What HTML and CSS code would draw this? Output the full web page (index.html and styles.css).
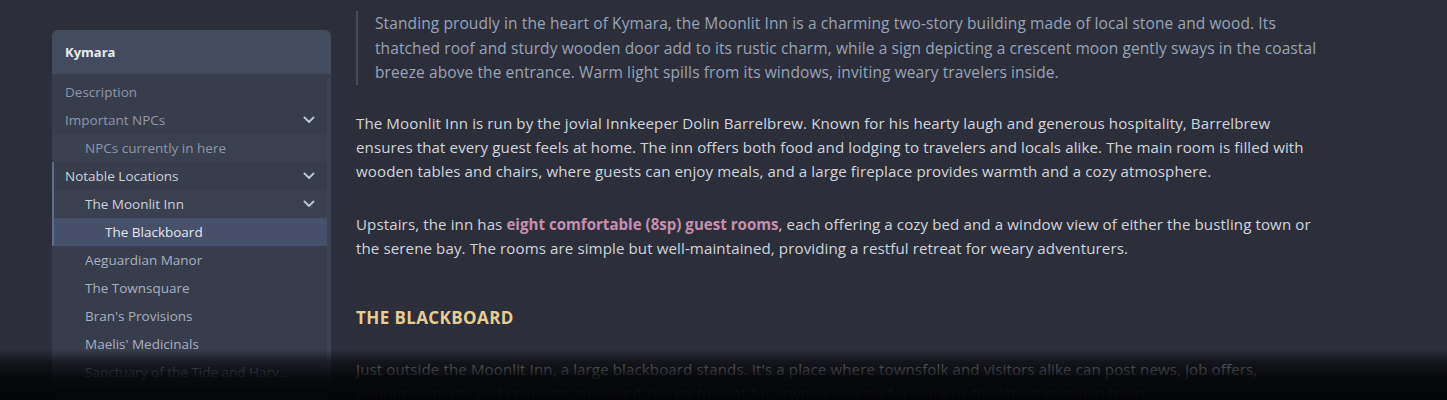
FILE: index.html
```html
<!DOCTYPE html>
<html lang="en">
<head>
<meta charset="utf-8">
<title>Kymara – The Moonlit Inn</title>
<link rel="stylesheet" href="styles.css">
</head>
<body>
<div class="layout">
  <nav class="sidebar">
    <div class="sidebar-head">Kymara</div>
    <div class="sidebar-body">
      <ul class="nav">
        <li class="row lvl1 dim"><span class="label">Description</span></li>
        <li class="row lvl1 dim has-caret"><span class="label">Important NPCs</span>
          <svg class="caret" viewBox="0 0 12 8" width="12" height="8"><polyline points="1.5,1.5 6,6 10.5,1.5"/></svg>
        </li>
        <li class="row lvl2 dim sub"><span class="label">NPCs currently in here</span></li>
        <li class="group">
          <div class="row lvl1 bright has-caret"><span class="label">Notable Locations</span>
            <svg class="caret" viewBox="0 0 12 8" width="12" height="8"><polyline points="1.5,1.5 6,6 10.5,1.5"/></svg>
          </div>
          <div class="row lvl2 bright has-caret sub"><span class="label">The Moonlit Inn</span>
            <svg class="caret" viewBox="0 0 12 8" width="12" height="8"><polyline points="1.5,1.5 6,6 10.5,1.5"/></svg>
          </div>
          <div class="row lvl3 active"><span class="label">The Blackboard</span></div>
        </li>
        <li class="row lvl2"><span class="label">Aeguardian Manor</span></li>
        <li class="row lvl2"><span class="label">The Townsquare</span></li>
        <li class="row lvl2"><span class="label">Bran's Provisions</span></li>
        <li class="row lvl2"><span class="label">Maelis' Medicinals</span></li>
        <li class="row lvl2"><span class="label">Sanctuary of the Tide and Harvest</span></li>
        <li class="row lvl2"><span class="label">The Harbour</span></li>
      </ul>
      <div class="scrolltrack"></div>
    </div>
  </nav>
  <main class="content">
    <blockquote class="quote">Standing proudly in the heart of Kymara, the Moonlit Inn is a charming two-story building made of local stone and wood. Its thatched roof and sturdy wooden door add to its rustic charm, while a sign depicting a crescent moon gently sways in the coastal breeze above the entrance. Warm light spills from its windows, inviting weary travelers inside.</blockquote>
    <p class="para">The Moonlit Inn is run by the jovial Innkeeper Dolin Barrelbrew. Known for his hearty laugh and generous hospitality, Barrelbrew ensures that every guest feels at home. The inn offers both food and lodging to travelers and locals alike. The main room is filled with wooden tables and chairs, where guests can enjoy meals, and a large fireplace provides warmth and a cozy atmosphere.</p>
    <p class="para">Upstairs, the inn has <strong class="hl">eight comfortable (8sp) guest rooms</strong>, each offering a cozy bed and a window view of either the bustling town or the serene bay. The rooms are simple but well-maintained, providing a restful retreat for weary adventurers.</p>
    <h2 class="heading">The Blackboard</h2>
    <p class="para">Just outside the Moonlit Inn, a large blackboard stands. It's a place where townsfolk and visitors alike can post news, job offers, announcements and requests, making it the go-to spot for anyone looking for work or the latest gossip in town.</p>
  </main>
</div>
<div class="fade"></div>
</body>
</html>
```
FILE: styles.css
```css
* { box-sizing: border-box; }
html, body { margin: 0; padding: 0; }
body {
  background: #2c2f3a;
  font-family: "Open Sans", "Noto Sans", sans-serif;
  height: 400px;
  overflow: hidden;
}
.layout {
  display: flex;
  align-items: flex-start;
  gap: 25px;
  padding-left: 52px;
}
.sidebar {
  width: 279px;
  flex: none;
  margin-top: 30px;
  background: #383d4c;
  border-radius: 6px 6px 0 0;
  overflow: hidden;
}
.sidebar-head {
  height: 44px;
  display: flex;
  align-items: center;
  padding-left: 13px;
  background: #444b5d;
  color: #e8eaf0;
  font-weight: 700;
  font-size: 13px;
}
.sidebar-body {
  display: flex;
  padding-top: 4px;
}
.nav {
  list-style: none;
  margin: 0;
  padding: 0;
  flex: 1;
  min-width: 0;
}
.scrolltrack {
  width: 4px;
  flex: none;
  background: #3e4353;
}
.row {
  height: 28px;
  display: flex;
  align-items: center;
  gap: 12px;
  font-size: 13.5px;
  color: #a7afc1;
  padding-right: 36px;
}
.row.has-caret { padding-right: 12px; }
.label {
  flex: 1;
  min-width: 0;
  white-space: nowrap;
  overflow: hidden;
  text-overflow: ellipsis;
}
.row.lvl1 { padding-left: 13px; }
.row.lvl2 { padding-left: 33px; }
.row.lvl3 { padding-left: 53px; }
.row.dim { color: #8f97a9; }
.row.bright { color: #cdd1db; }
.row.sub { background: #3b404f; }
.row.active { background: #465069; color: #e4e7ee; }
.group { border-left: 2px solid #5e6d8e; }
.group .row.lvl1 { padding-left: 11px; }
.group .row.lvl2 { padding-left: 31px; }
.group .row.lvl3 { padding-left: 51px; }
.caret {
  flex: none;
  fill: none;
  stroke: #b9c0d0;
  stroke-width: 2;
  stroke-linecap: round;
  stroke-linejoin: round;
}
.content {
  width: 962px;
  padding-top: 11px;
  font-size: 15.5px;
  letter-spacing: 0.1px;
}
.quote {
  margin: 0;
  border-left: 2px solid #474c59;
  padding-left: 17px;
  color: #9ba3b7;
  line-height: 24.5px;
}
.para {
  margin: 29px 0 0;
  color: #d2d5dd;
  font-size: 15.1px;
  line-height: 24px;
}
.quote + .para { margin-top: 26px; }
.hl { color: #c68fb0; font-weight: 700; letter-spacing: 0; }
.heading {
  margin: 46px 0 0;
  color: #e6cd92;
  font-size: 17px;
  line-height: 24px;
  font-weight: 700;
  text-transform: uppercase;
  letter-spacing: 0.4px;
}
.heading + .para { margin-top: 27px; }
.fade {
  position: fixed;
  left: 0;
  right: 0;
  bottom: 0;
  height: 50px;
  background: linear-gradient(to bottom, rgba(4,5,7,0) 0%, rgba(4,5,7,0.55) 22%, rgba(4,5,7,0.9) 55%, rgba(4,5,7,1) 100%);
  pointer-events: none;
}
```
